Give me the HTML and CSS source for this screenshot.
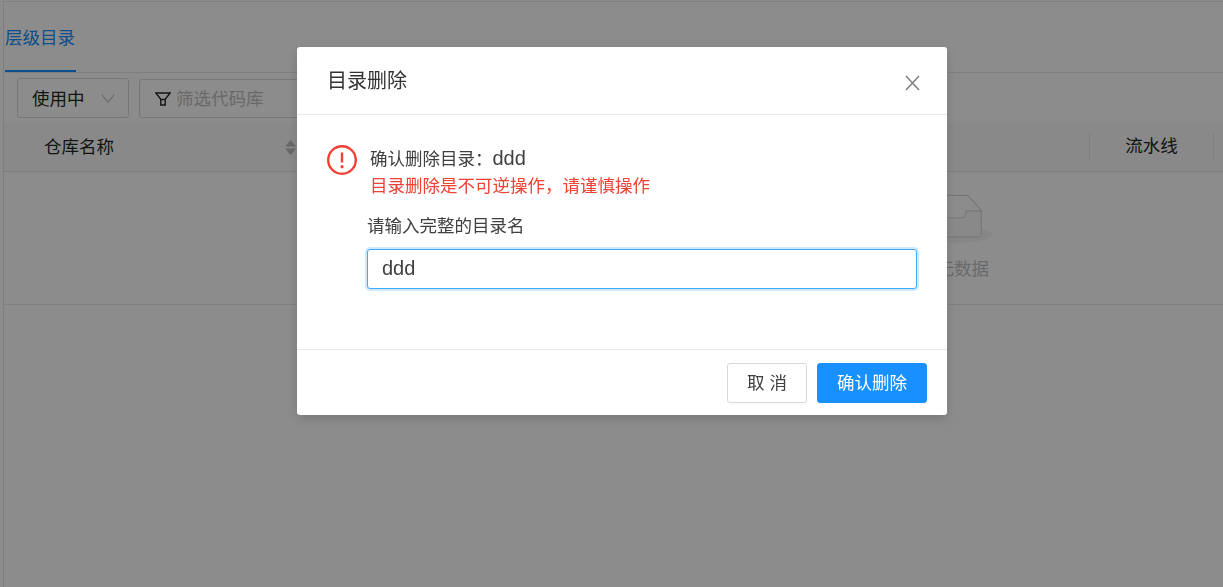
FILE: index.html
```html
<!DOCTYPE html>
<html lang="zh-CN">
<head>
<meta charset="utf-8">
<title>目录删除</title>
<link rel="stylesheet" href="styles.css">
</head>
<body>
<div class="page">
  <div class="tabs"><div class="tab">层级目录</div></div>
  <div class="filters">
    <div class="select"><span class="lift">使用中</span>
      <svg class="chev" width="14" height="9" viewBox="0 0 14 9"><path d="M.7.7l6.300 7.300L13.300.7" fill="none" stroke="#bfbfbf" stroke-width="1.100"/></svg>
    </div>
    <div class="search">
      <svg class="funnel" width="16" height="14" viewBox="0 0 16 14"><path d="M.8 1h14.400l-5 6.200v5.800H5.800V7.200z" fill="none" stroke="#262626" stroke-width="1.400"/><path d="M5.800 7.500h4.400" stroke="#262626" stroke-width="1.400"/></svg>
      <span class="lift placeholder">筛选代码库</span>
    </div>
  </div>
  <div class="thead">
    <div class="th name"><span class="lift">仓库名称</span>
      <svg class="sort" width="11" height="15" viewBox="0 0 11 15"><path d="M5.500 0l5.500 6.500H0zM0 8.500h11L5.500 15z" fill="#bfbfbf"/></svg>
    </div>
    <div class="th pipe">流水线</div>
  </div>
  <div class="empty">
    <svg class="box" width="76" height="49" viewBox="0 0 64 41">
      <g transform="translate(0 1)" fill="none" fill-rule="evenodd">
        <ellipse cx="32" cy="33" rx="32" ry="7" fill="#f5f5f5"/>
        <g fill-rule="nonzero" stroke="#d9d9d9">
          <path d="M55 12.760L44.854 1.258C44.367.474 43.656 0 42.907 0H21.093c-.749 0-1.460.474-1.947 1.257L9 12.761V22h46v-9.240z"/>
          <path d="M41.613 15.931c0-1.605.994-2.930 2.227-2.931H55v18.137C55 33.260 53.680 35 52.050 35h-40.100C10.320 35 9 33.259 9 31.137V13h11.160c1.233 0 2.227 1.323 2.227 2.928v.022c0 1.605 1.005 2.901 2.237 2.901h14.752c1.232 0 2.237-1.308 2.237-2.913v-.007z" fill="#fafafa"/>
        </g>
      </g>
    </svg>
    <div class="empty-text">暂无数据</div>
  </div>
</div>
<div class="mask"></div>
<div class="modal">
  <div class="modal-head">
    <div class="modal-title">目录删除</div>
    <svg class="close" width="15" height="16" viewBox="0 0 15 16"><path d="M1 1l13 14M14 1L1 15" stroke="#7f7f7f" stroke-width="1.500" fill="none"/></svg>
  </div>
  <div class="modal-body">
    <div class="warn">
      <svg class="warn-icon" width="32" height="32" viewBox="0 0 32 32"><circle cx="16" cy="16" r="13.800" fill="none" stroke="#f04134" stroke-width="2.400"/><path d="M16 8.500v10" stroke="#f04134" stroke-width="2.400"/><circle cx="16" cy="22.700" r="1.600" fill="#f04134"/></svg>
      <div class="warn-text">
        <div class="confirm">确认删除目录&#xFF1A;<span class="dir">ddd</span></div>
        <div class="danger">目录删除是不可逆操作&#xFF0C;请谨慎操作</div>
      </div>
    </div>
    <div class="field">
      <label class="field-label" for="dirname">请输入完整的目录名</label>
      <input class="field-input" id="dirname" type="text" value="ddd">
    </div>
  </div>
  <div class="modal-foot">
    <button class="btn" type="button">取 消</button>
    <button class="btn primary" type="button">确认删除</button>
  </div>
</div>
</body>
</html>
```
FILE: styles.css
```css
* { box-sizing: border-box; }
html, body { margin: 0; height: 100%; overflow: hidden; }
body {
  background: #fff;
  font-family: "Liberation Sans", "Noto Sans CJK SC", sans-serif;
  font-size: 17.5px;
  color: #262626;
}
.page {
  height: 586px;
  margin-left: 3px;
  border-top: 1px solid #e8e8e8;
  border-left: 1px solid #e8e8e8;
  position: relative;
  top: 1px;
}
.tabs {
  height: 71px;
  border-bottom: 1px solid #e8e8e8;
  padding-left: 1px;
  display: flex;
}
.tab {
  width: 71px;
  height: 70px;
  border-bottom: 2px solid #1890ff;
  color: #1890ff;
  line-height: 72px;
  white-space: nowrap;
}
.filters {
  display: flex;
  gap: 10px;
  padding: 5px 0 0 13px;
  height: 50px;
}
.select, .search {
  height: 40px;
  border: 1px solid #d9d9d9;
  border-radius: 3px;
  display: flex;
  align-items: center;
}
.select { width: 112px; padding: 0 13px 0 14px; justify-content: space-between; }
.search { width: 200px; padding: 0 0 0 15px; gap: 5px; margin-top: 1px; height: 39px; }
.placeholder { color: #bfbfbf; }
.lift { padding-bottom: 2px; }
.thead {
  height: 49px;
  background: #fafafa;
  border-bottom: 1px solid #e8e8e8;
  display: flex;
  align-items: center;
}
.th { white-space: nowrap; }
.name { width: 292px; padding-left: 40px; display: flex; align-items: center; justify-content: space-between; }
.name .lift { padding-bottom: 4px; }
.pipe {
  margin-left: 793px;
  width: 125px;
  height: 28px;
  line-height: 26px;
  text-align: center;
  border-left: 1px solid #e8e8e8;
  border-right: 1px solid #e8e8e8;
}
.empty {
  height: 133px;
  border-bottom: 1px solid #e8e8e8;
  padding: 22px 0 0 681px;
  display: flex;
  flex-direction: column;
  align-items: center;
}
.box { flex: none; }
.empty-text { color: #bfbfbf; line-height: 24px; margin-top: 14px; }

.mask { position: fixed; inset: 0; background: rgba(0, 0, 0, .45); }
.modal {
  position: fixed;
  left: 297px;
  top: 47px;
  width: 650px;
  height: 368px;
  background: #fff;
  border-radius: 3px;
  box-shadow: 0 4px 12px rgba(0, 0, 0, .15);
  display: flex;
  flex-direction: column;
}
.modal-head {
  height: 68px;
  border-bottom: 1px solid #e8e8e8;
  padding: 0 27px 0 30px;
  display: flex;
  align-items: center;
  justify-content: space-between;
}
.modal-title { font-size: 20px; line-height: 28px; margin-top: 1px; color: #333; }
.close { margin-top: 4px; }
.modal-body { flex: 1; padding: 29px 30px 0 29px; }
.warn { display: flex; gap: 12px; }
.warn-icon { flex: none; }
.warn-text { line-height: 27px; padding-top: 1px; }
.confirm { color: #404040; }
.dir { font-size: 20px; }
.danger { color: #f04134; }
.field { padding-left: 41px; margin-top: 12px; }
.field-label { display: block; line-height: 28px; color: #404040; }
.field-input {
  display: block;
  width: 550px;
  height: 40px;
  margin-top: 9px;
  padding: 0 14px 2px;
  border: 1px solid #40a9ff;
  border-radius: 3px;
  outline: none;
  box-shadow: 0 0 0 2px rgba(24, 144, 255, .2);
  font: inherit;
  font-size: 20px;
  color: #404040;
}
.modal-foot {
  height: 66px;
  border-top: 1px solid #e8e8e8;
  padding: 13px 20px 0 0;
  display: flex;
  justify-content: flex-end;
  gap: 10px;
}
.btn {
  height: 40px;
  width: 80px;
  border: 1px solid #d9d9d9;
  border-radius: 3px;
  background: #fff;
  color: #404040;
  font: inherit;
  box-shadow: 0 2px 0 rgba(0, 0, 0, .015);
  padding: 0 0 4px;
}
.primary { width: 110px; background: #1890ff; border-color: #1890ff; color: #fff; }
```
